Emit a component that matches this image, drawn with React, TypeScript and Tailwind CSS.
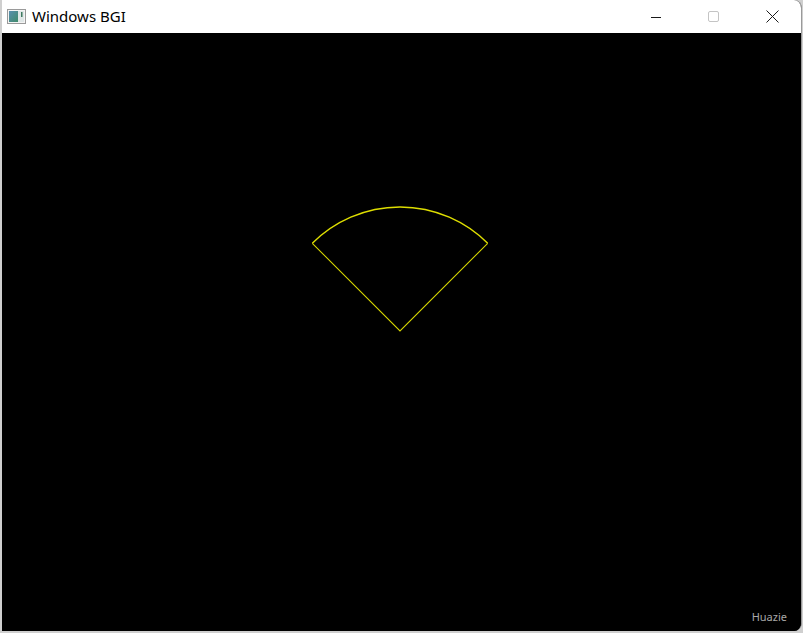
import React from 'react';

// small app icon drawn in the title bar
const AppIcon: React.FC = () => (
  <svg width="19" height="15" viewBox="0 0 19 15">
    <defs>
      <linearGradient id="pane" x1="0" y1="0" x2="1" y2="1">
        <stop offset="0" stopColor="#5a8fb0" />
        <stop offset="1" stopColor="#3f8a6a" />
      </linearGradient>
    </defs>
    <rect x="0.5" y="0.5" width="18" height="14" fill="#f4f4f4" stroke="#9a9a9a" />
    <rect x="2" y="2" width="9" height="11" fill="url(#pane)" />
    <rect x="11" y="2" width="6" height="11" fill="#dfe6e6" />
    <rect x="14" y="3" width="1.5" height="5" fill="#3f7a60" />
  </svg>
);

const Controls: React.FC = () => (
  <div className="flex h-full items-stretch">
    <div className="w-[58px] flex items-center justify-center">
      <svg width="12" height="12" viewBox="0 0 12 12">
        <line x1="1" y1="6.5" x2="11" y2="6.5" stroke="#1a1a1a" strokeWidth="1" />
      </svg>
    </div>
    <div className="w-[58px] flex items-center justify-center">
      <svg width="12" height="12" viewBox="0 0 12 12">
        <rect x="0.5" y="0.5" width="10" height="10" rx="1.5" fill="none" stroke="#c4c4c4" />
      </svg>
    </div>
    <div className="w-[58px] flex items-center justify-center">
      <svg width="13" height="13" viewBox="0 0 13 13">
        <path d="M0.5 0.5 L12.5 12.5 M12.5 0.5 L0.5 12.5" stroke="#1a1a1a" strokeWidth="1" />
      </svg>
    </div>
  </div>
);

// sector drawn by BGI: centre (398, 298) inside the canvas, radius 124, 45..135 degrees
const Sector: React.FC = () => {
  const cx = 398;
  const cy = 298;
  const r = 124;
  const d = r * Math.SQRT1_2;
  return (
    <svg className="absolute inset-0" width="799" height="600" viewBox="0 0 799 600">
      <path
        d={`M${cx - d} ${cy - d} L${cx} ${cy} L${cx + d} ${cy - d}`}
        fill="none"
        stroke="#d4d400"
        strokeWidth="1.1"
      />
      <path
        d={`M${cx - d} ${cy - d} A${r} ${r} 0 0 1 ${cx + d} ${cy - d}`}
        fill="none"
        stroke="#dede00"
        strokeWidth="1.4"
      />
    </svg>
  );
};

export default function App() {
  return (
    <div
      className="w-[803px] h-[633px] bg-[#cfcfcf] flex pl-[2px] pb-[2px] pr-[1px]"
      style={{ fontFamily: '"Noto Sans", "Liberation Sans", sans-serif' }}
    >
      <div className="flex-1 flex flex-col rounded-tr-[8px] rounded-br-[8px] overflow-hidden border-r border-[#9a9a9a] bg-black">
        <div className="h-[33px] bg-white flex items-center justify-between">
          <div className="flex items-center gap-[6px] pl-[5px]">
            <AppIcon />
            <span className="text-[15px] text-black leading-none">Windows BGI</span>
          </div>
          <Controls />
        </div>
        <div className="flex-1 relative bg-black">
          <Sector />
          <span className="absolute right-[14px] bottom-[9px] text-[11px] text-[#a8a8a8] leading-none">
            Huazie
          </span>
        </div>
      </div>
    </div>
  );
}
